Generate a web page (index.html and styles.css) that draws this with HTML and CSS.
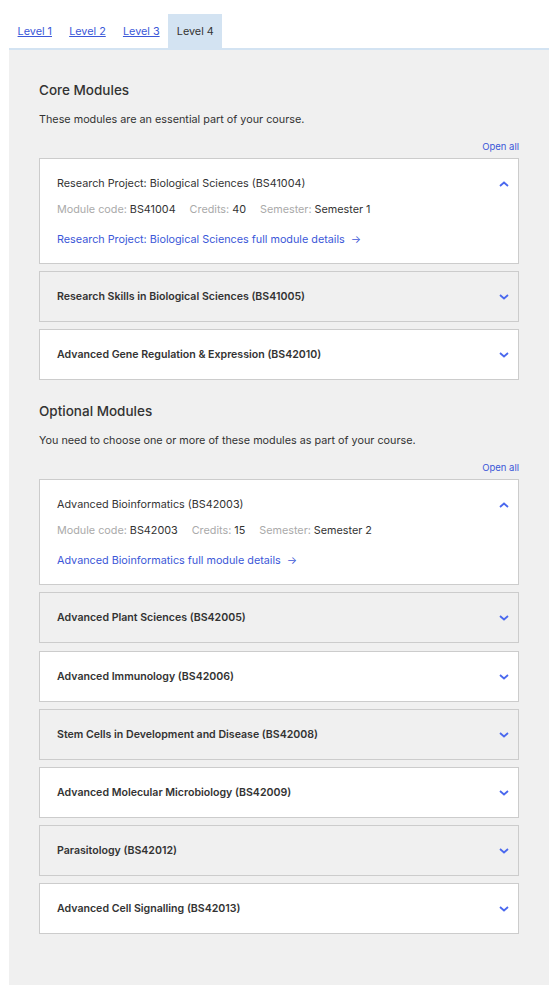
FILE: index.html
```html
<!DOCTYPE html>
<html lang="en">
<head>
<meta charset="utf-8">
<title>Modules</title>
<link rel="stylesheet" href="styles.css">
</head>
<body>
<div class="wrap">
  <nav class="tabs">
    <a class="tab" href="#">Level 1</a>
    <a class="tab" href="#">Level 2</a>
    <a class="tab" href="#">Level 3</a>
    <span class="tab active">Level 4</span>
  </nav>
  <main class="panel">
    <h2 class="heading">Core Modules</h2>
    <p class="intro">These modules are an essential part of your course.</p>
    <div class="openall"><a href="#">Open all</a></div>
    <div class="list">
      <div class="card open">
        <div class="card-head"><span class="title">Research Project: Biological Sciences (BS41004)</span><svg class="chev" viewBox="0 0 10 6"><path d="M1 5 L5 1.5 L9 5"/></svg></div>
        <div class="meta"><span class="lbl">Module code:</span> BS41004<span class="lbl gap">Credits:</span> 40<span class="lbl gap">Semester:</span> Semester 1</div>
        <a class="details" href="#">Research Project: Biological Sciences full module details <span class="arrow">→</span></a>
      </div>
      <div class="card grey">
        <div class="card-head"><span class="title">Research Skills in Biological Sciences (BS41005)</span><svg class="chev" viewBox="0 0 10 6"><path d="M1 1 L5 4.5 L9 1"/></svg></div>
      </div>
      <div class="card">
        <div class="card-head"><span class="title">Advanced Gene Regulation &amp; Expression (BS42010)</span><svg class="chev" viewBox="0 0 10 6"><path d="M1 1 L5 4.5 L9 1"/></svg></div>
      </div>
    </div>

    <h2 class="heading second">Optional Modules</h2>
    <p class="intro">You need to choose one or more of these modules as part of your course.</p>
    <div class="openall"><a href="#">Open all</a></div>
    <div class="list">
      <div class="card open">
        <div class="card-head"><span class="title">Advanced Bioinformatics (BS42003)</span><svg class="chev" viewBox="0 0 10 6"><path d="M1 5 L5 1.5 L9 5"/></svg></div>
        <div class="meta"><span class="lbl">Module code:</span> BS42003<span class="lbl gap">Credits:</span> 15<span class="lbl gap">Semester:</span> Semester 2</div>
        <a class="details" href="#">Advanced Bioinformatics full module details <span class="arrow">→</span></a>
      </div>
      <div class="card grey">
        <div class="card-head"><span class="title">Advanced Plant Sciences (BS42005)</span><svg class="chev" viewBox="0 0 10 6"><path d="M1 1 L5 4.5 L9 1"/></svg></div>
      </div>
      <div class="card">
        <div class="card-head"><span class="title">Advanced Immunology (BS42006)</span><svg class="chev" viewBox="0 0 10 6"><path d="M1 1 L5 4.5 L9 1"/></svg></div>
      </div>
      <div class="card grey">
        <div class="card-head"><span class="title">Stem Cells in Development and Disease (BS42008)</span><svg class="chev" viewBox="0 0 10 6"><path d="M1 1 L5 4.5 L9 1"/></svg></div>
      </div>
      <div class="card">
        <div class="card-head"><span class="title">Advanced Molecular Microbiology (BS42009)</span><svg class="chev" viewBox="0 0 10 6"><path d="M1 1 L5 4.5 L9 1"/></svg></div>
      </div>
      <div class="card grey">
        <div class="card-head"><span class="title">Parasitology (BS42012)</span><svg class="chev" viewBox="0 0 10 6"><path d="M1 1 L5 4.5 L9 1"/></svg></div>
      </div>
      <div class="card">
        <div class="card-head"><span class="title">Advanced Cell Signalling (BS42013)</span><svg class="chev" viewBox="0 0 10 6"><path d="M1 1 L5 4.5 L9 1"/></svg></div>
      </div>
    </div>
  </main>
</div>
</body>
</html>
```

FILE: styles.css
```css
* { box-sizing: border-box; }
html, body { margin: 0; padding: 0; background: #fff; }
body {
  font-family: Inter, "Noto Sans", sans-serif;
  color: #333;
  font-size: 11px;
}
.wrap {
  margin-left: 9px;
  width: 540px;
  padding-top: 14px;
  padding-bottom: 14px;
}
.tabs {
  display: flex;
  height: 34px;
  border-bottom: 2px solid #d3e3f2;
  box-sizing: content-box;
}
.tab {
  display: flex;
  align-items: center;
  padding: 0 8.6px;
  font-size: 10.8px;
  color: #3b57d8;
  text-decoration: underline;
  height: 34px;
}
.tab.active {
  background: #d3e3f2;
  color: #333;
  text-decoration: none;
}
.panel {
  background: #f0f0f0;
  padding: 31px 30px 51px;
}
.heading {
  margin: 0;
  font-size: 13.5px;
  line-height: 18px;
  font-weight: 500;
  color: #333;
}
.heading.second { margin-top: 22px; }
.intro {
  margin: 13px 0 0;
  font-size: 10.8px;
  line-height: 16px;
}
.openall {
  margin-top: 13px;
  display: flex;
  justify-content: flex-end;
  line-height: 12px;
  font-size: 9.5px;
}
.openall a { color: #3b57d8; text-decoration: none; }
.list {
  margin-top: 5px;
  display: flex;
  flex-direction: column;
  gap: 7.15px;
}
.card {
  background: #fff;
  border: 1px solid #cccccc;
}
.card.grey { background: #f0f0f0; }
.card-head {
  display: flex;
  align-items: center;
  justify-content: space-between;
  padding: 17px 9px 16px 17px;
  line-height: 16px;
}
.card .title { font-weight: 600; font-size: 10.6px; }
.card.open .title { font-weight: 400; font-size: 10.8px; }
.card.open .card-head { padding-bottom: 0; }
.chev {
  width: 10px;
  height: 6px;
  fill: none;
  stroke: #4a68ee;
  stroke-width: 1.8;
}
.meta {
  padding: 0 17px;
  margin-top: 10px;
  line-height: 15px;
  font-size: 10.8px;
  color: #333;
}
.lbl { color: #aaa; }
.lbl.gap { margin-left: 14px; }
.details {
  display: block;
  margin: 15px 17px 16px;
  line-height: 15px;
  color: #3b57d8;
  text-decoration: none;
  font-size: 10.8px;
}
.arrow { margin-left: 3px; }
```
